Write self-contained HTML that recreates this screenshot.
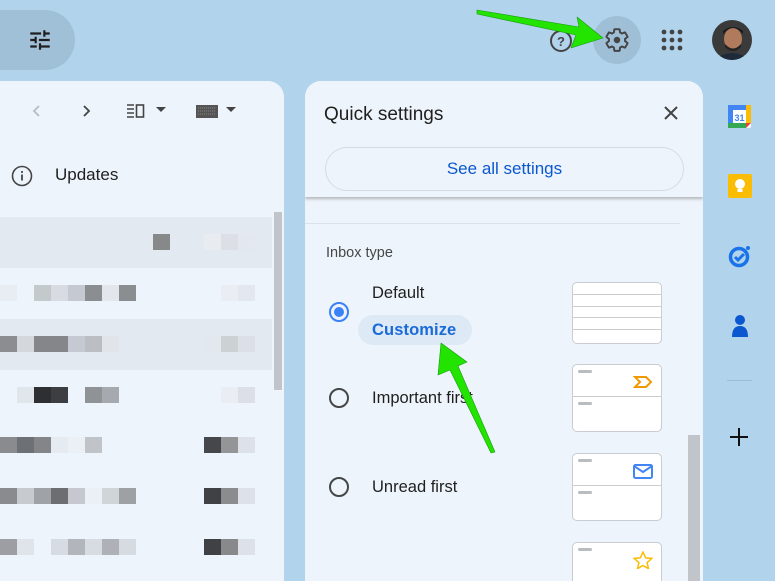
<!DOCTYPE html>
<html><head><meta charset="utf-8"><style>
*{margin:0;padding:0;box-sizing:border-box}
body{width:775px;height:565px;overflow:hidden;background:#b1d4ec;font-family:"Liberation Sans",Arial,sans-serif;position:relative}
.abs{position:absolute}
.pill{left:-30px;top:10px;width:105px;height:60px;border-radius:30px;background:#a0c0d8}
.left{left:0;top:81px;width:284px;height:500px;background:#eef4fb;border-top-right-radius:16px}
.row{position:absolute;left:0;width:272px;height:51px}
.b{position:absolute;width:17px;height:16px}
.qs{left:305px;top:81px;width:398px;height:500px;background:#eef4fb;border-top-left-radius:16px;border-top-right-radius:16px;overflow:hidden}
.thumb{position:absolute;left:267px;width:90px;background:#fff;border:1px solid #c9ccd0;border-radius:5px;overflow:hidden}
.dash{position:absolute;left:5px;width:14px;height:3px;border-radius:2px;background:#b9bcc0}
.radio{position:absolute;left:24px;width:20px;height:20px;border-radius:50%;border:2px solid #444746}
.lbl{position:absolute;left:67px;font-size:16.5px;color:#1f1f1f}
</style></head><body>
<div class="abs pill"></div>
<svg class="abs" style="left:27px;top:27px" width="26" height="26" viewBox="0 0 24 24"><path d="M3 17v2h6v-2H3zM3 5v2h10V5H3zm10 16v-2h8v-2h-8v-2h-2v6h2zM7 9v2H3v2h4v2h2V9H7zm14 4v-2H11v2h10zm-6-4h2V7h4V5h-4V3h-2v6z" fill="#1f1f1f"/></svg>

<div class="abs left">
<svg class="abs" style="left:29px;top:22px" width="16" height="16" viewBox="0 0 16 16"><path d="M10 3L5 8l5 5" stroke="#b8bcc0" stroke-width="1.8" fill="none"/></svg>
<svg class="abs" style="left:78px;top:22px" width="16" height="16" viewBox="0 0 16 16"><path d="M6 3l5 5-5 5" stroke="#444" stroke-width="1.8" fill="none"/></svg>
<svg class="abs" style="left:127px;top:23px" width="20" height="14" viewBox="0 0 20 14"><path d="M0 1h7M0 5h7M0 9h7M0 13h7" stroke="#444" stroke-width="1.5"/><rect x="9.5" y="1" width="7" height="12" fill="none" stroke="#444" stroke-width="1.6"/></svg>
<svg class="abs" style="left:156px;top:26px" width="10" height="6"><path d="M0 0h10L5 5z" fill="#444"/></svg>
<svg class="abs" style="left:196px;top:24px" width="22" height="13"><rect width="22" height="13" fill="#555"/><path d="M2 3h18M2 6h18M2 9h18" stroke="#888" stroke-width="1" stroke-dasharray="1 1"/></svg>
<svg class="abs" style="left:226px;top:26px" width="10" height="6"><path d="M0 0h10L5 5z" fill="#444"/></svg>
<svg class="abs" style="left:11px;top:84px" width="22" height="22" viewBox="0 0 22 22"><circle cx="11" cy="11" r="9.5" fill="none" stroke="#444" stroke-width="1.6"/><rect x="10.1" y="9.5" width="1.8" height="6" fill="#444"/><rect x="10.1" y="6" width="1.8" height="1.9" fill="#444"/></svg>
<div class="abs" style="left:55px;top:84px;font-size:17px;color:#1f1f1f">Updates</div>
<div class="abs" style="left:274px;top:131px;width:8px;height:178px;background:#c1c5c9"></div>
</div>

<div class="row" style="top:217px;background:#e3e9f1"><div class="b" style="left:153px;top:17px;background:#87888a"></div><div class="b" style="left:204px;top:17px;background:#e8ecf1"></div><div class="b" style="left:221px;top:17px;background:#dcdfe5"></div><div class="b" style="left:238px;top:17px;background:#e3e7ee"></div></div>
<div class="row" style="top:268px"><div class="b" style="left:0;top:17px;background:#e8edf3"></div><div class="b" style="left:34px;top:17px;background:#c4c9cc"></div><div class="b" style="left:51px;top:17px;background:#d8dce2"></div><div class="b" style="left:68px;top:17px;background:#c5cad2"></div><div class="b" style="left:85px;top:17px;background:#8b8e91"></div><div class="b" style="left:102px;top:17px;background:#e3e7ec"></div><div class="b" style="left:119px;top:17px;background:#8b8e91"></div><div class="b" style="left:221px;top:17px;background:#eaeef4"></div><div class="b" style="left:238px;top:17px;background:#e3e7ee"></div></div>
<div class="row" style="top:319px;background:#e3e9f1"><div class="b" style="left:0;top:17px;background:#8b8d90"></div><div class="b" style="left:17px;top:17px;background:#d4d8dc"></div><div class="b" style="left:34px;top:17px;background:#848689"></div><div class="b" style="left:51px;top:17px;background:#848689"></div><div class="b" style="left:68px;top:17px;background:#c5cad2"></div><div class="b" style="left:85px;top:17px;background:#bbbec2"></div><div class="b" style="left:102px;top:17px;background:#e1e5ea"></div><div class="b" style="left:204px;top:17px;background:#e3e7ee"></div><div class="b" style="left:221px;top:17px;background:#ccd1d4"></div><div class="b" style="left:238px;top:17px;background:#dcdfe5"></div></div>
<div class="row" style="top:370px"><div class="b" style="left:17px;top:17px;background:#e1e6ed"></div><div class="b" style="left:34px;top:17px;background:#2e2f33"></div><div class="b" style="left:51px;top:17px;background:#3d3e42"></div><div class="b" style="left:85px;top:17px;background:#909396"></div><div class="b" style="left:102px;top:17px;background:#a6a9ae"></div><div class="b" style="left:221px;top:17px;background:#eaeef4"></div><div class="b" style="left:238px;top:17px;background:#dcdfe5"></div></div>
<div class="row" style="top:420px"><div class="b" style="left:0;top:17px;background:#8a8b8e"></div><div class="b" style="left:17px;top:17px;background:#6d7074"></div><div class="b" style="left:34px;top:17px;background:#838588"></div><div class="b" style="left:51px;top:17px;background:#e6ebf1"></div><div class="b" style="left:68px;top:17px;background:#eaf0f6"></div><div class="b" style="left:85px;top:17px;background:#c0c4c9"></div><div class="b" style="left:204px;top:17px;background:#46474b"></div><div class="b" style="left:221px;top:17px;background:#939597"></div><div class="b" style="left:238px;top:17px;background:#dde2e9"></div></div>
<div class="row" style="top:471px"><div class="b" style="left:0;top:17px;background:#8a8b8e"></div><div class="b" style="left:17px;top:17px;background:#c7cbd0"></div><div class="b" style="left:34px;top:17px;background:#9fa2a7"></div><div class="b" style="left:51px;top:17px;background:#6c6e72"></div><div class="b" style="left:68px;top:17px;background:#c5c9cf"></div><div class="b" style="left:85px;top:17px;background:#eaf0f6"></div><div class="b" style="left:102px;top:17px;background:#d0d6d7"></div><div class="b" style="left:119px;top:17px;background:#9ea1a4"></div><div class="b" style="left:204px;top:17px;background:#404145"></div><div class="b" style="left:221px;top:17px;background:#8b8c8e"></div><div class="b" style="left:238px;top:17px;background:#dde2e9"></div></div>
<div class="row" style="top:522px"><div class="b" style="left:0;top:17px;background:#9c9ea3"></div><div class="b" style="left:17px;top:17px;background:#dfe4ea"></div><div class="b" style="left:51px;top:17px;background:#d7dbe2"></div><div class="b" style="left:68px;top:17px;background:#b2b5bc"></div><div class="b" style="left:85px;top:17px;background:#d7dbe2"></div><div class="b" style="left:102px;top:17px;background:#aeb1b8"></div><div class="b" style="left:119px;top:17px;background:#d6dbe2"></div><div class="b" style="left:204px;top:17px;background:#404145"></div><div class="b" style="left:221px;top:17px;background:#88898b"></div><div class="b" style="left:238px;top:17px;background:#dde2e9"></div></div>

<div class="abs qs">
<div class="abs" style="left:0;top:0;width:398px;height:116px;background:#eef4fb;box-shadow:0 2px 3px rgba(0,0,0,.25)"></div>
<div class="abs" style="left:19px;top:23px;font-size:19px;color:#1f1f1f">Quick settings</div>
<svg class="abs" style="left:359px;top:25px" width="14" height="14"><path d="M1 1l12 12M13 1L1 13" stroke="#444" stroke-width="2"/></svg>
<div class="abs" style="left:20px;top:66px;width:359px;height:44px;border:1px solid #d3dce5;border-radius:22px;text-align:center;line-height:42px;font-size:17px;color:#0b57d0">See all settings</div>
<div class="abs" style="left:0;top:142px;width:375px;height:1px;background:#dbe3ea"></div>
<div class="abs" style="left:21px;top:164px;font-size:14.5px;color:#444746">Inbox type</div>
<div class="radio" style="top:221px;border-color:#3b82f6"><div style="position:absolute;left:3px;top:3px;width:10px;height:10px;border-radius:50%;background:#3b82f6"></div></div>
<div class="lbl" style="top:203px">Default</div>
<div class="abs" style="left:53px;top:234px;width:114px;height:30px;border-radius:15px;background:#dde9f5"></div>
<div class="abs" style="left:67px;top:240px;font-size:16.5px;color:#1a6ad8;font-weight:bold;letter-spacing:.1px">Customize</div>
<div class="radio" style="top:307px"></div>
<div class="lbl" style="top:308px">Important first</div>
<div class="radio" style="top:396px"></div>
<div class="lbl" style="top:397px">Unread first</div>
<div class="thumb" style="top:201px;height:62px"><div style="position:absolute;left:0;top:11px;width:90px;height:1px;background:#ccc"></div><div style="position:absolute;left:0;top:23px;width:90px;height:1px;background:#ccc"></div><div style="position:absolute;left:0;top:34px;width:90px;height:1px;background:#ccc"></div><div style="position:absolute;left:0;top:46px;width:90px;height:1px;background:#ccc"></div></div>
<div class="thumb" style="top:283px;height:68px"><div class="dash" style="top:5px"></div><svg style="position:absolute;left:60px;top:10px" width="20" height="14"><path d="M2 2h11l5 5-5 5H2l5-5z" fill="none" stroke="#f29900" stroke-width="2"/></svg><div style="position:absolute;left:0;top:31px;width:90px;height:1px;background:#ccc"></div><div class="dash" style="top:37px"></div></div>
<div class="thumb" style="top:372px;height:68px"><div class="dash" style="top:5px"></div><svg style="position:absolute;left:60px;top:10px" width="20" height="15"><rect x="1" y="1" width="18" height="13" rx="1.5" fill="none" stroke="#4285f4" stroke-width="2"/><path d="M1 2l9 6 9-6" fill="none" stroke="#4285f4" stroke-width="2"/></svg><div style="position:absolute;left:0;top:31px;width:90px;height:1px;background:#ccc"></div><div class="dash" style="top:37px"></div></div>
<div class="thumb" style="top:461px;height:68px"><div class="dash" style="top:5px"></div><svg style="position:absolute;left:60px;top:8px" width="20" height="18"><path d="M10 1l2.6 5.8 6.2.6-4.7 4.2 1.4 6.1L10 14.5l-5.5 3.2 1.4-6.1L1.2 7.4l6.2-.6z" fill="none" stroke="#fbbc04" stroke-width="1.5"/></svg></div>
<div class="abs" style="left:383px;top:354px;width:12px;height:150px;background:#c1c5c9"></div>
</div>

<svg class="abs" style="left:549px;top:29px" width="24" height="24" viewBox="0 0 24 24"><circle cx="12" cy="12" r="10" fill="none" stroke="#444" stroke-width="2"/><text x="12" y="17" font-size="13" text-anchor="middle" fill="#444" font-family="Liberation Sans" font-weight="bold">?</text></svg>
<div class="abs" style="left:593px;top:16px;width:48px;height:48px;border-radius:50%;background:#9fbfd6"></div>
<svg class="abs" style="left:604px;top:27px" width="26" height="26" viewBox="0 0 24 24"><path d="M19.4 13c.04-.33.06-.66.06-1s-.02-.67-.06-1l2.1-1.650c.2-.15.25-.42.12-.64l-2-3.46c-.12-.22-.39-.3-.61-.22l-2.49 1c-.52-.4-1.08-.73-1.69-.98l-.38-2.65A.49.49 0 0 0 14 2h-4c-.25 0-.46.18-.49.42l-.38 2.65c-.61.25-1.170.59-1.69.98l-2.49-1c-.23-.09-.49 0-.61.22l-2 3.46c-.13.22-.07.49.12.64L4.57 11c-.04.33-.07.66-.07 1s.03.67.07 1l-2.11 1.65c-.19.15-.24.42-.12.64l2 3.46c.12.22.39.3.61.22l2.49-1c.52.4 1.08.73 1.69.98l.38 2.65c.03.24.24.42.49.42h4c.25 0 .46-.18.49-.42l.38-2.65c.61-.25 1.17-.59 1.69-.98l2.49 1c.23.09.49 0 .61-.22l2-3.46c.12-.22.07-.49-.12-.64L19.4 13z" fill="none" stroke="#444" stroke-width="1.8"/><circle cx="12" cy="12" r="3" fill="#444"/></svg>
<svg class="abs" style="left:661px;top:29px" width="22" height="22"><g fill="#444"><circle cx="3" cy="3" r="2.4"/><circle cx="11" cy="3" r="2.4"/><circle cx="19" cy="3" r="2.4"/><circle cx="3" cy="11" r="2.4"/><circle cx="11" cy="11" r="2.4"/><circle cx="19" cy="11" r="2.4"/><circle cx="3" cy="19" r="2.4"/><circle cx="11" cy="19" r="2.4"/><circle cx="19" cy="19" r="2.4"/></g></svg>
<svg class="abs" style="left:712px;top:20px" width="40" height="40"><defs><clipPath id="c"><circle cx="20" cy="20" r="20"/></clipPath></defs><g clip-path="url(#c)"><rect width="40" height="40" fill="#3a3a3a"/><ellipse cx="21" cy="19" rx="9" ry="11" fill="#b07a5c"/><path d="M11 14q10-12 20 0v-3q-10-8-20 0z" fill="#1a1a1a"/><path d="M13 24q8 9 16 0v3q-8 8-16 0z" fill="#222"/><path d="M2 40q18-14 36 0z" fill="#1e2a3a"/></g></svg>

<svg class="abs" style="left:728px;top:105px" width="23" height="23" viewBox="0 0 23 23"><rect width="23" height="23" rx="2" fill="#fff"/><path d="M0 0h18v5H5v13H0V2z" fill="#4285f4"/><rect x="18" y="0" width="5" height="18" fill="#fbbc04"/><rect x="0" y="18" width="18" height="5" fill="#34a853"/><path d="M18 18h5l-5 5z" fill="#ea4335"/><text x="11.5" y="16" font-size="9" text-anchor="middle" fill="#4285f4" font-family="Liberation Sans" font-weight="bold">31</text></svg>
<svg class="abs" style="left:728px;top:174px" width="24" height="24"><rect width="24" height="24" rx="2" fill="#fbbc04"/><circle cx="12" cy="10" r="5" fill="#fff"/><rect x="9.5" y="15" width="5" height="3" fill="#fff"/></svg>
<svg class="abs" style="left:728px;top:244px" width="24" height="24" viewBox="0 0 24 24"><circle cx="11" cy="13" r="8.5" fill="none" stroke="#1a73e8" stroke-width="3.5"/><path d="M7 13l3 3 6-6" fill="none" stroke="#1a73e8" stroke-width="3"/><circle cx="20" cy="4" r="2" fill="#1a73e8"/></svg>
<svg class="abs" style="left:729px;top:313px" width="22" height="24"><circle cx="11" cy="7" r="5" fill="#0b57d0"/><path d="M3 24q0-11 8-11t8 11z" fill="#0b57d0"/></svg>
<div class="abs" style="left:727px;top:380px;width:25px;height:1px;background:#9ebdd4"></div>
<svg class="abs" style="left:730px;top:428px" width="18" height="18"><path d="M9 0v18M0 9h18" stroke="#111" stroke-width="2"/></svg>

<svg class="abs" style="left:0;top:0" width="775" height="565"><g fill="#22e400" stroke="#1a9a10" stroke-width=".6" stroke-linejoin="round"><polygon points="477,10 579,27 577,17 603,38 571,48 576,35 477,14"/><polygon points="441,343 467,362 458,366 495,452 491,453 450,370 438,375"/></g></svg>
</body></html>
